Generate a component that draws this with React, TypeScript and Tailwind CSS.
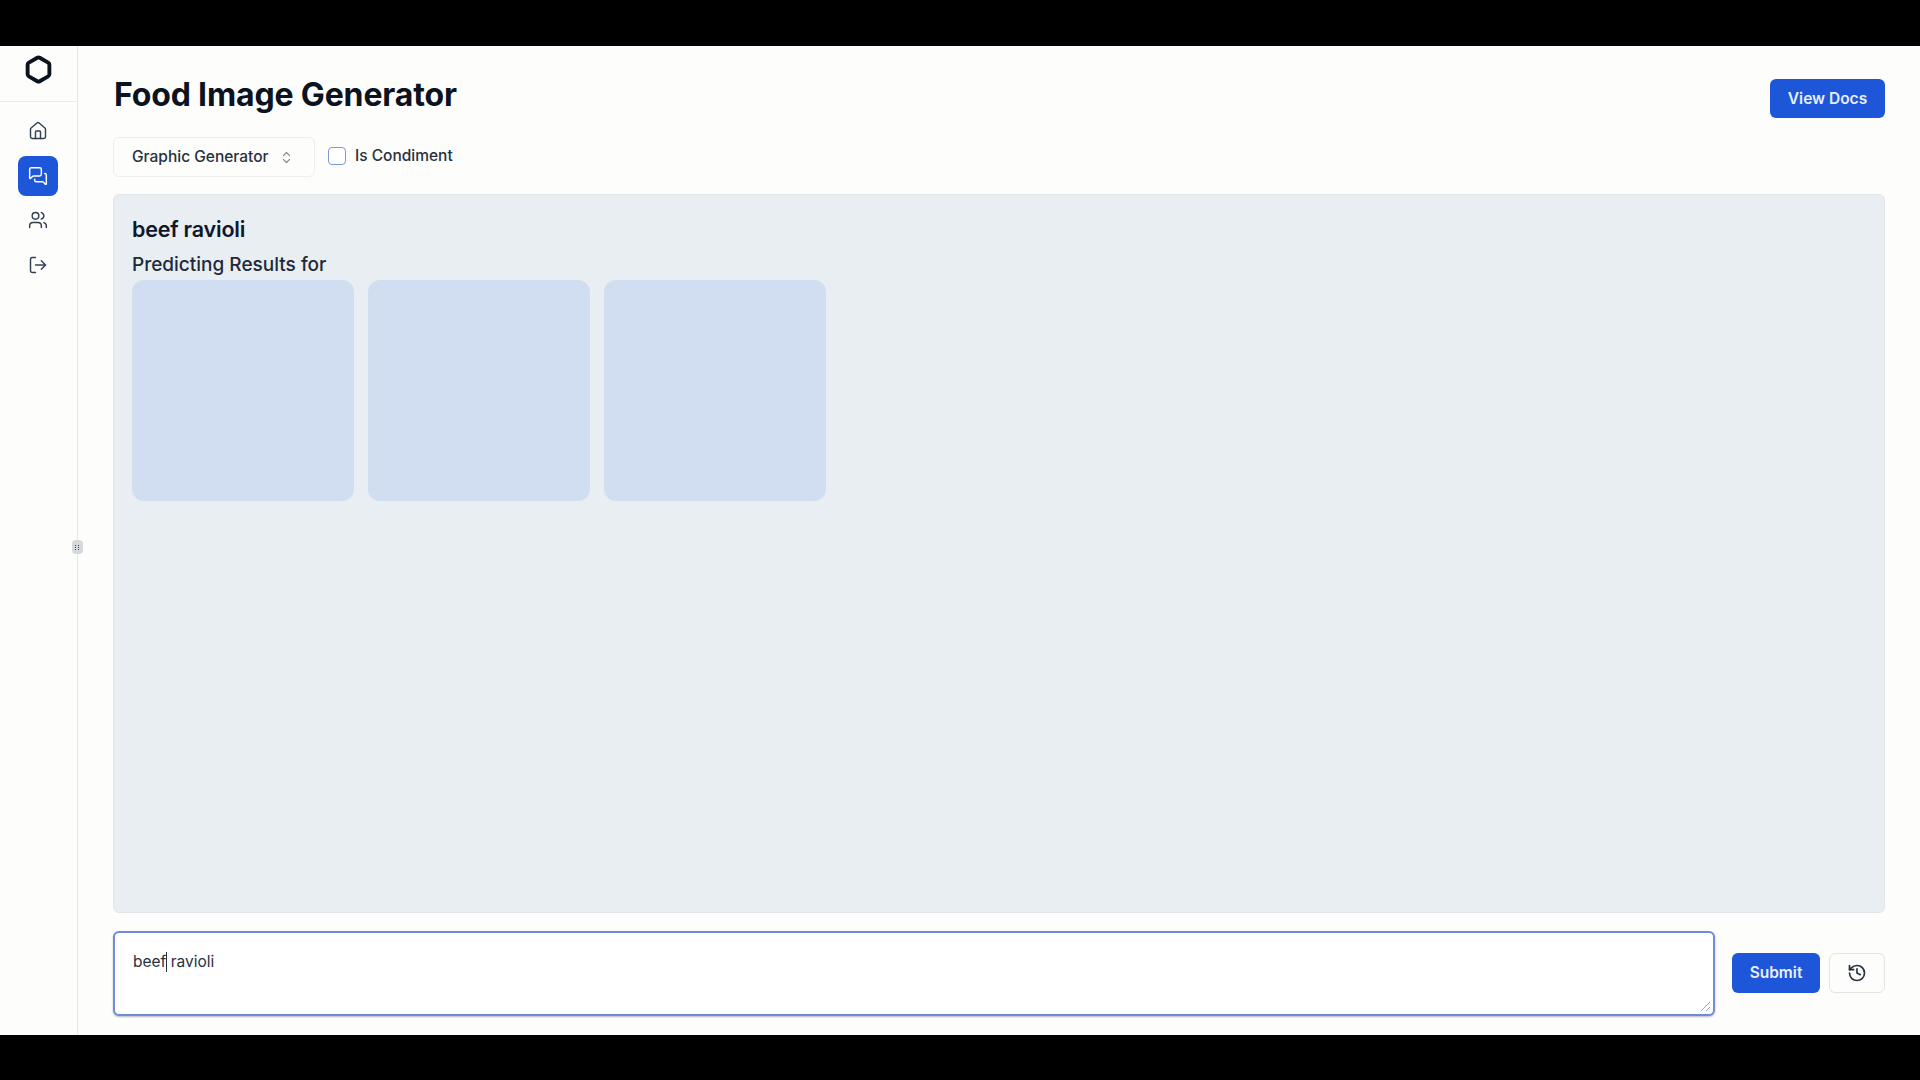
import { ChevronsUpDown, Hexagon, History, Home, LogOut, MessagesSquare, Users } from 'lucide-react'

const navItems = [
  { icon: Home, active: false },
  { icon: MessagesSquare, active: true },
  { icon: Users, active: false },
  { icon: LogOut, active: false },
]

export default function App() {
  return (
    <div className="h-screen bg-black pt-[46px] pb-[45px] font-['Inter',sans-serif] text-[#0f172a]">
      <div className="flex h-full bg-[#fdfdfb]">
        {/* sidebar */}
        <aside className="relative w-[78px] shrink-0 border-r border-[#e5e7eb]">
          <div className="flex h-[56px] items-center justify-center border-b border-[#e9ebee] pb-[9px]">
            <Hexagon className="h-[29px] w-[29px] text-[#0b1220]" strokeWidth={3.2} />
          </div>
          <nav className="mt-[9px] flex flex-col items-center gap-[4.5px] pr-px">
            {navItems.map(({ icon: Icon, active }, i) => (
              <div
                key={i}
                className={`flex h-[40px] w-[40px] items-center justify-center rounded-lg ${
                  active ? 'bg-[#1d56d8] text-white' : 'text-[#334155]'
                }`}
              >
                <Icon className="h-[20px] w-[20px]" strokeWidth={1.75} />
              </div>
            ))}
          </nav>
          {/* resize handle */}
          <div className="absolute top-[494px] right-[-6px] grid h-[14px] w-[11px] grid-cols-2 place-content-center gap-px rounded-sm bg-[#d5d8dd] px-[3px]">
            {[0, 1, 2, 3, 4, 5].map((d) => (
              <span key={d} className="h-px w-px bg-[#334155]" />
            ))}
          </div>
        </aside>

        {/* main */}
        <main className="flex min-w-0 flex-1 flex-col pt-[33px] pr-[35px] pb-[19px] pl-[35px]">
          <div className="flex items-start justify-between">
            <h1 className="pl-px text-[32px] leading-[32px] font-bold tracking-[-0.15px] text-[#0b1220]">Food Image Generator</h1>
            <button className="h-[39px] w-[115px] rounded-md bg-[#1d56d8] text-[15.5px] font-semibold text-[#e8efff]">
              View Docs
            </button>
          </div>

          <div className="mt-[19px] flex items-center">
            <div className="flex h-[40px] w-[202px] items-center justify-between rounded-md border border-[#eceef1] pr-[20px] pl-[18px] text-[15.5px] font-medium text-[#27313f]">
              Graphic Generator
              <ChevronsUpDown className="h-[15px] w-[15px] text-[#7c8797]" strokeWidth={1.75} />
            </div>
            <div className="ml-[13px] h-[18px] w-[18px] -translate-y-px rounded-[4px] border-[1.5px] border-[#7d96d8] bg-white" />
            <span className="ml-[9px] -translate-y-px text-[15.5px] font-medium text-[#27313f]">Is Condiment</span>
          </div>

          <section className="mt-[17px] min-h-0 flex-1 rounded-md border border-[#e1e6eb] bg-[#e8eef2] px-[18px] pt-[19px]">
            <h2 className="text-[21.5px] leading-[30px] font-semibold tracking-[-0.2px] text-[#0f172a]">beef ravioli</h2>
            <p className="mt-[6px] text-[19px] leading-[30px] font-medium text-[#1e293b]">Predicting Results for</p>
            <div className="flex gap-[14px]">
              {[0, 1, 2].map((c) => (
                <div key={c} className="h-[221px] w-[222px] rounded-xl bg-[#d1def1]" />
              ))}
            </div>
          </section>

          <div className="mt-[18px] flex items-center">
            <div className="relative h-[85px] w-[1602px] shrink-0 rounded-md border-2 border-[#6f8cdb] bg-white px-[18px] pt-[17px] text-[15.5px] leading-[24px] text-[#27313f] shadow-[0_1px_2px_rgba(15,23,42,0.3)]">
              <span>beef</span>
              <span className="absolute top-[19px] left-[51px] h-[20px] w-px bg-[#27313f]" />
              <span> ravioli</span>
              {/* textarea grip */}
              <svg className="absolute right-[2px] bottom-[2px] h-[11px] w-[11px] text-[#9ca3af]" viewBox="0 0 11 11" fill="none" stroke="currentColor">
                <path d="M1 10 10 1M6 10l4-4" />
              </svg>
            </div>
            <button className="ml-[17px] h-[40px] w-[88px] -translate-y-px rounded-md bg-[#1d56d8] text-[15.5px] font-semibold text-[#e8efff]">
              Submit
            </button>
            <button className="ml-[9px] flex h-[40px] w-[56px] -translate-y-px items-center justify-center rounded-md border border-[#e2e4e8] text-[#27313f]">
              <History className="h-[20px] w-[20px]" strokeWidth={2} />
            </button>
          </div>
        </main>
      </div>
    </div>
  )
}
